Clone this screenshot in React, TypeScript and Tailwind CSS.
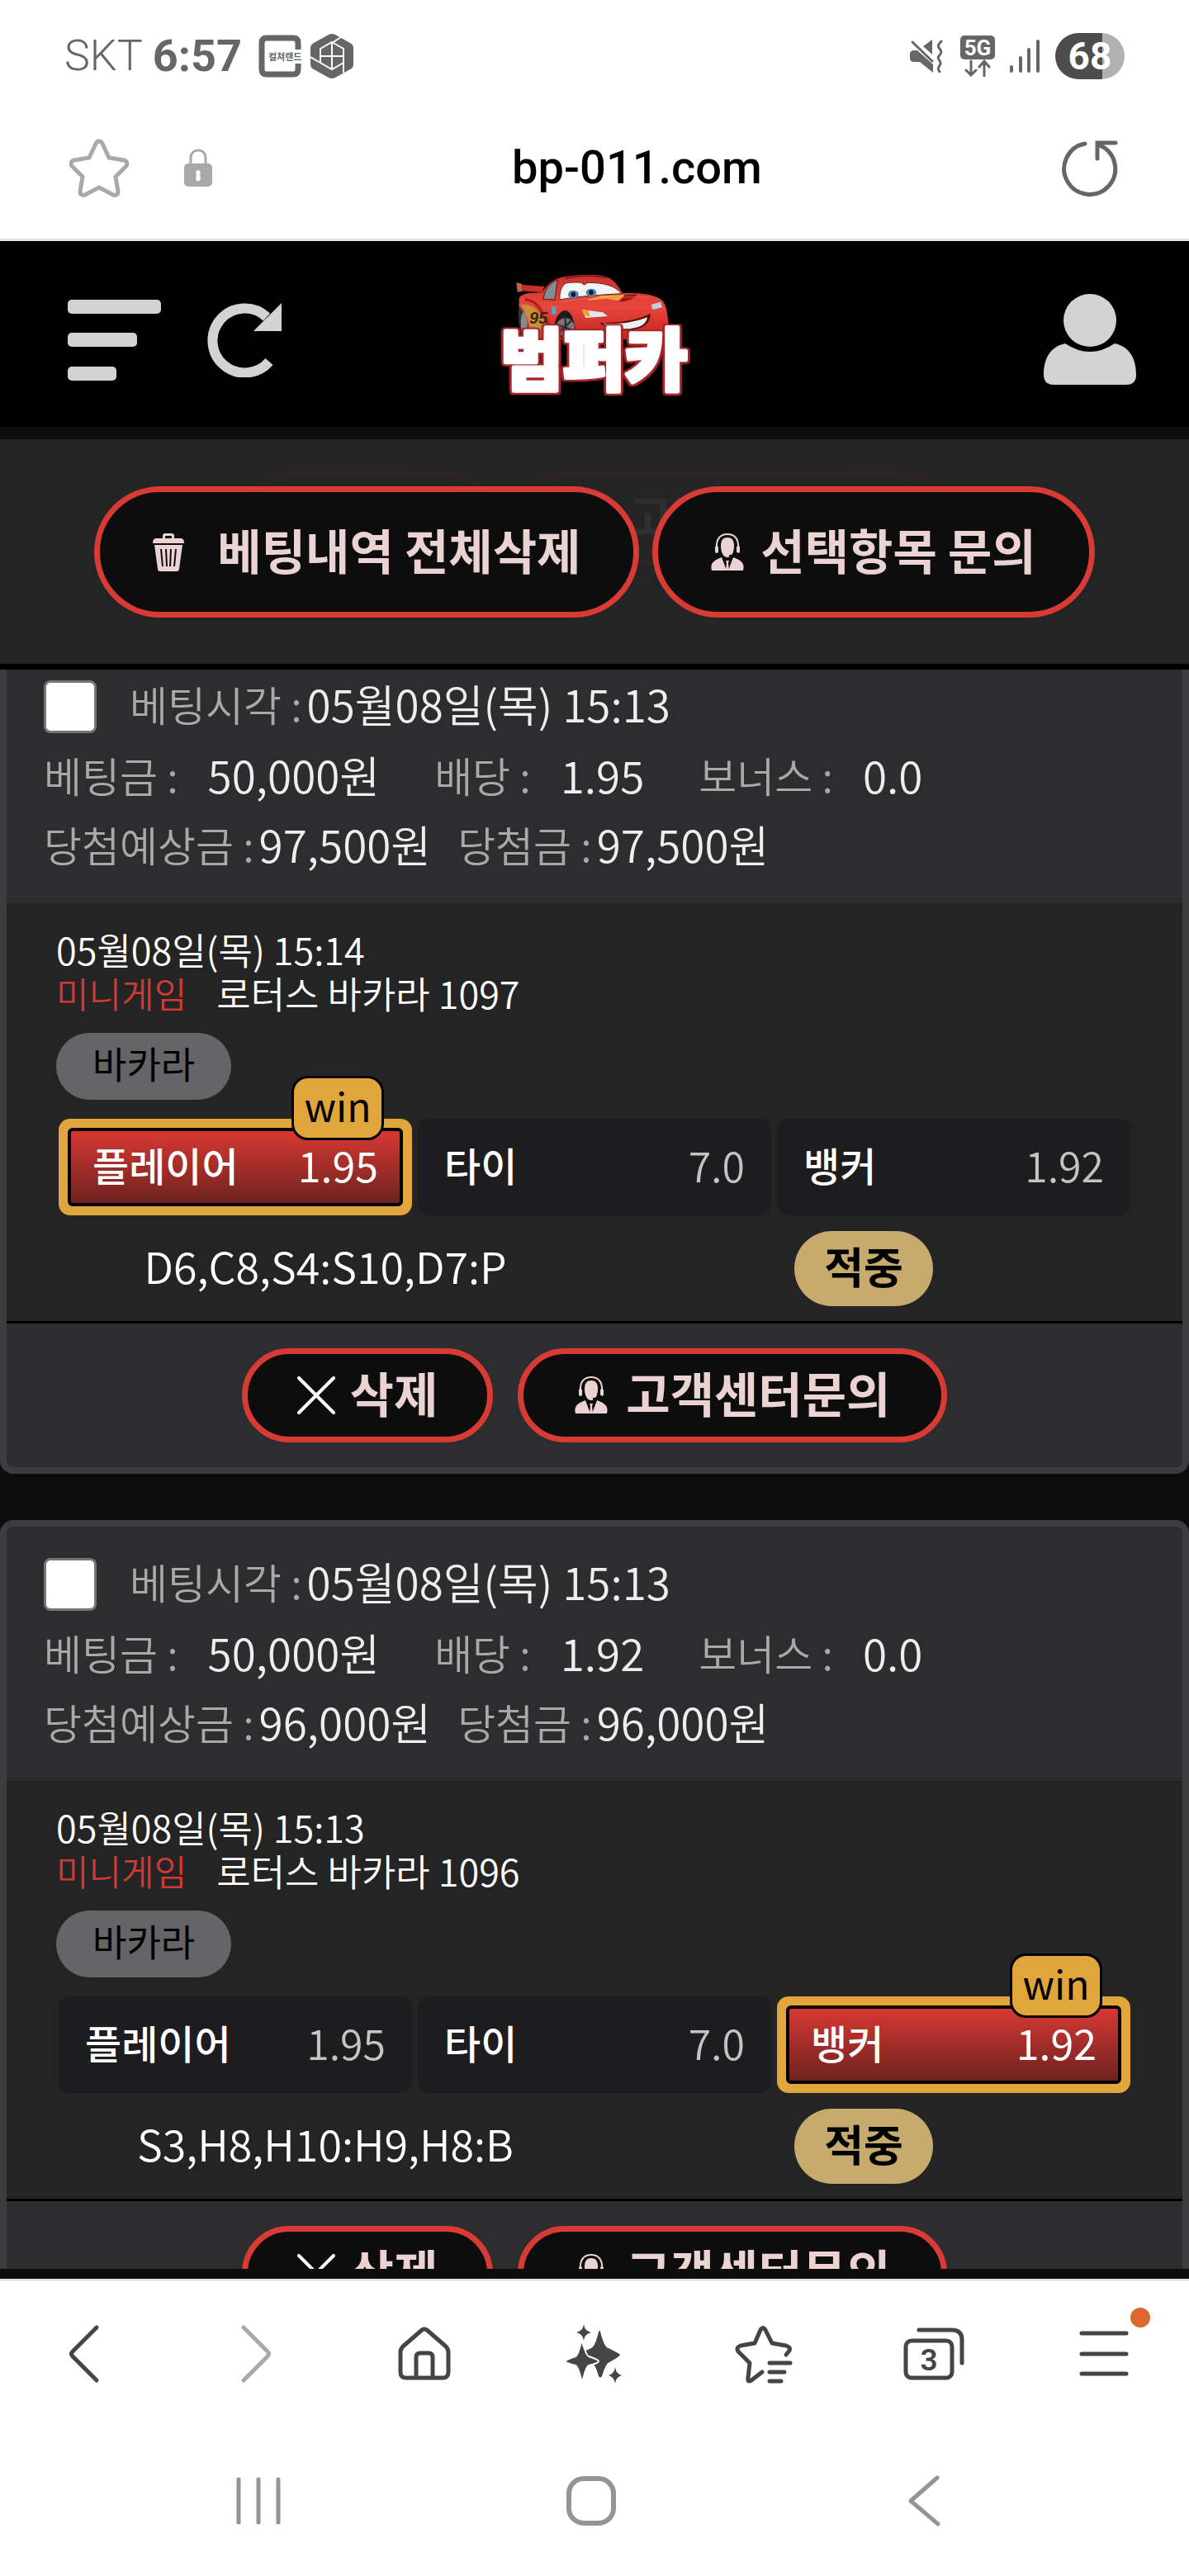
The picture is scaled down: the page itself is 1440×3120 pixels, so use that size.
import type { ReactNode } from 'react'
import clsx from 'clsx'

interface Option {
  name: string
  odds: string
  win?: boolean
}

interface Bet {
  id: number
  placedAt: string
  stake: string
  odds: string
  bonus: string
  expected: string
  payout: string
  playedAt: string
  game: string
  options: Option[]
  result: string
}

const bets: Bet[] = [
  {
    id: 1097,
    placedAt: '05월08일(목) 15:13',
    stake: '50,000원',
    odds: '1.95',
    bonus: '0.0',
    expected: '97,500원',
    payout: '97,500원',
    playedAt: '05월08일(목) 15:14',
    game: '로터스 바카라 1097',
    options: [
      { name: '플레이어', odds: '1.95', win: true },
      { name: '타이', odds: '7.0' },
      { name: '뱅커', odds: '1.92' },
    ],
    result: 'D6,C8,S4:S10,D7:P',
  },
  {
    id: 1096,
    placedAt: '05월08일(목) 15:13',
    stake: '50,000원',
    odds: '1.92',
    bonus: '0.0',
    expected: '96,000원',
    payout: '96,000원',
    playedAt: '05월08일(목) 15:13',
    game: '로터스 바카라 1096',
    options: [
      { name: '플레이어', odds: '1.95' },
      { name: '타이', odds: '7.0' },
      { name: '뱅커', odds: '1.92', win: true },
    ],
    result: 'S3,H8,H10:H9,H8:B',
  },
]

const STAR = 'M36 4c2 0 3 1 4 3l8 17 18 3c4 1 5 4 3 7L56 47l3 18c0 4-3 5-6 4L36 60 19 69c-3 1-6 0-6-4l3-18L3 34c-2-3-1-6 3-7l18-3 8-17c1-2 2-3 4-3z'

// Icons
function AgentIcon() {
  return (
    <svg viewBox="0 0 40 46" className="h-[46px] w-10 shrink-0" fill="#ebd3d3" aria-hidden="true">
      <path d="M7 18C6 6 12 1 20 1s14 5 13 17" fill="none" stroke="#ebd3d3" strokeWidth="2" />
      <path d="M12 15c0-7 3-10 8-10s8 3 8 10c0 8-3 14-8 14s-8-6-8-14z" />
      <rect x="5" y="15" width="4" height="9" rx="2" />
      <rect x="31" y="15" width="4" height="9" rx="2" />
      <path d="M32 23c-1 3-5 4-10 4" fill="none" stroke="#0d0d0d" strokeWidth="2" />
      <path d="M13 29l6 16H1c-2-8 1-12 12-16zM27 29l-6 16h18c2-8-1-12-12-16z" />
      <path d="M18 33h4l-1 3 1 9h-4l1-9z" />
    </svg>
  )
}

function TrashIcon() {
  return (
    <svg viewBox="0 0 38 46" className="h-[46px] w-[38px] shrink-0" fill="#ebd3d3" aria-hidden="true">
      <path d="M12 6V3q0-3 3-3h8q3 0 3 3v3h8q4 0 4 6H0q0-6 4-6zm3 0h8V4q0-1-1-1h-6q-1 0-1 1z" />
      <path d="M2 14h34l-4 29q0 3-3 3H9q-3 0-3-3z" />
      <path d="M10 19l2 21M16 19l1 21M22 19l-1 21M28 19l-2 21" stroke="#0d0d0d" strokeWidth="2" />
    </svg>
  )
}

function CloseIcon() {
  return (
    <svg viewBox="0 0 46 46" className="size-[46px] shrink-0" stroke="#fff" strokeWidth="4" strokeLinecap="round" aria-hidden="true">
      <path d="M2 2l42 42M44 2L2 44" />
    </svg>
  )
}

function Logo() {
  return (
    <svg viewBox="0 60 960 546" className="h-[182px] w-80" role="img" aria-label="범퍼카">
      <defs>
        <linearGradient id="paint" x1="0" y1="0" x2="0" y2="1">
          <stop offset="0" stopColor="#c9302b" />
          <stop offset="0.5" stopColor="#e8473d" />
          <stop offset="1" stopColor="#c4231d" />
        </linearGradient>
      </defs>
      <path d="M196 124l20 4 2 28-18 2z" fill="#b8684a" />
      <path d="M216 132l82 6-8 22-72-6z" fill="#c9302b" />
      <path d="M206 200c-6 60 2 110 20 130h40V190z" fill="#333236" />
      <path
        d="M206 180c10-18 40-18 84-20 20-34 44-50 80-57 60-10 110-10 150-2 30 10 46 34 62 62 60-4 124 4 146 28 18 24 22 70 20 139H240c0-50-6-90-34-120z"
        fill="url(#paint)"
      />
      <path d="M212 204c30-4 60 10 80 50l34 70h-80c0-50-10-90-34-120z" fill="#c8903a" />
      <path d="M228 186c24 0 50 16 66 56M300 250l20 40" fill="none" stroke="#a9201c" strokeWidth="10" />
      <path d="M294 184c4-36 20-58 52-70-4 26-6 48-10 72z" fill="#7e8c95" stroke="#7c1b18" strokeWidth="4" />
      <path d="M372 110c50-14 110-12 156-4" fill="none" stroke="#7c1b18" strokeWidth="5" />
      <path d="M354 186c-2-28 6-50 22-60 20-4 40-4 56-2l10 8 14-8c60 0 100 12 122 40-70 4-150 8-224 22z" fill="#f1f4f6" stroke="#7c1b18" strokeWidth="3" />
      <ellipse cx="403" cy="167" rx="19" ry="15" fill="#4a86ad" />
      <ellipse cx="403" cy="167" rx="8" ry="9" fill="#101820" />
      <ellipse cx="468" cy="160" rx="19" ry="14" fill="#4a86ad" />
      <ellipse cx="468" cy="160" rx="8" ry="9" fill="#101820" />
      <path d="M454 186l50-14 96-4-16 10-20 10-40-6-66 6z" fill="#f0b43a" />
      <path d="M590 168l46-2c-10 14-30 26-66 28z" fill="#8f1a17" />
      <path d="M350 196c60-16 200-20 330-20" fill="none" stroke="#f06a5c" strokeWidth="4" opacity="0.6" />
      <path d="M434 222l30 4 46 6 18 14-80 6z" fill="#dfe8ef" />
      <path d="M434 222l24 4 6 22-18-4z" fill="#eaa62c" />
      <path d="M686 204l34-10 6 20-34 8z" fill="#b9d0e4" />
      <path d="M498 270c60 0 130-6 186-34-2 40-30 58-80 60-50 0-86-8-106-26z" fill="#5c100e" />
      <path d="M512 272c56 4 116-4 160-22-4 26-26 38-68 42-40 0-74-6-92-20z" fill="#eceff0" />
      <path d="M334 330c-6-50 6-96 36-104 20-2 36 20 42 84z" fill="#1d1b1d" />
      <circle cx="374" cy="286" r="33" fill="#77777b" />
      <path d="M374 254v64M344 276l60 22M350 306l46-44" stroke="#2b2b2e" strokeWidth="7" />
      <ellipse cx="224" cy="270" rx="12" ry="40" fill="#8b8785" />
      <path d="M324 210h16v30h-16z" fill="#6d96b8" />
      <text
        x="276"
        y="272"
        textAnchor="middle"
        fontSize="60"
        fontWeight="700"
        fill="#3d261c"
        className="font-['Liberation_Sans',sans-serif] italic"
      >
        95
      </text>
      <text
        x="478"
        y="494"
        textAnchor="middle"
        fontSize="246"
        fontWeight="900"
        fill="#fff"
        stroke="#fff"
        strokeWidth="14"
        strokeLinejoin="round"
        className="font-['Noto_Sans_CJK_KR',sans-serif] [filter:drop-shadow(7px_0_0_#a8262b)_drop-shadow(-7px_0_0_#a8262b)_drop-shadow(0_7px_0_#a8262b)_drop-shadow(0_-5px_0_#a8262b)]"
      >
        범퍼카
      </text>
    </svg>
  )
}

// Device and browser chrome
function StatusBar() {
  return (
    <div className="flex h-[136px] shrink-0 items-center justify-between px-[78px] font-[Roboto,sans-serif] text-[#666]">
      <div className="flex items-center">
        <span className="text-[52px] leading-none font-light">SKT</span>
        <span className="ml-3 text-[54px] leading-none font-bold">6:57</span>
        <svg viewBox="0 0 52 52" className="ml-5 size-[52px]" aria-hidden="true">
          <path d="M48 18V10Q48 4 42 4H10Q4 4 4 10V42Q4 48 10 48H42Q48 48 48 42V35" fill="none" stroke="#666" strokeWidth="7" />
          <text x="12" y="31" fontSize="11" fontWeight="700" fill="#666" className="font-['Noto_Sans_CJK_KR',sans-serif]">컬쳐랜드</text>
        </svg>
        <svg viewBox="0 0 52 54" className="ml-[11px] h-[54px] w-[52px]" aria-hidden="true">
          <path d="M26 0q2 0 4 1l18 10q4 2 4 6v20q0 4-4 6L30 53q-4 2-8 0L4 43q-4-2-4-6V17q0-4 4-6L22 1q2-1 4-1z" fill="#666" />
          <g fill="none" stroke="#fff" strokeWidth="2">
            <path d="M26 10l14 8v17l-14 8-14-8V18zM26 10v33M12 27h28M26 11L37 4M40 18v29M12 35L0 28" />
          </g>
        </svg>
      </div>
      <div className="flex items-center">
        <svg viewBox="0 0 40 40" className="size-10" fill="#666" aria-hidden="true">
          <path d="M27 0v18L16 8zM5 13h4l19 17v10L12 27H5q-5 0-5-5v-4q0-5 5-5z" />
          <path d="M3 3l24 23" stroke="#666" strokeWidth="3" strokeLinecap="round" />
          <path d="M38 2c-4 5-5 5-2 9s2 5-1 9 3 5 2 9-5 5-1 10" fill="none" stroke="#666" strokeWidth="3" strokeLinecap="round" />
        </svg>
        <svg viewBox="0 0 42 50" className="ml-[21px] h-[50px] w-[42px]" aria-hidden="true">
          <rect width="42" height="29" rx="5" fill="#666" />
          <text x="21" y="24" textAnchor="middle" fontSize="26" fontWeight="700" fill="#fff">5G</text>
          <path d="M13 31v16M7 42l6 6 6-6M29 49V32M23 38l6-7 6 7" fill="none" stroke="#666" strokeWidth="3" strokeLinecap="round" />
        </svg>
        <svg viewBox="0 0 36 40" className="ml-[18px] h-10 w-9" stroke="#666" strokeWidth="4" strokeLinecap="round" aria-hidden="true">
          <path d="M2 33v5M13 22v16M23 12v26M34 2v36" />
        </svg>
        <span className="ml-[19px] flex h-14 w-[84px] items-center justify-center rounded-full bg-linear-to-r from-[#4d4d4d] from-68% to-[#b1b1b1] to-68% text-[46px] font-bold text-white">
          68
        </span>
      </div>
    </div>
  )
}

function AddressBar() {
  return (
    <div className="flex h-[156px] shrink-0 items-center border-b-[3px] border-[#e4e4e4] px-[84px] pb-5">
      <div className="flex items-center gap-[67px]">
        <button type="button" aria-label="북마크">
          <svg viewBox="0 0 72 72" className="size-[72px]" fill="none" stroke="#a9a9a9" strokeWidth="5">
            <path d={STAR} />
          </svg>
        </button>
        <svg viewBox="0 0 34 46" className="h-[46px] w-[34px]" aria-hidden="true">
          <path d="M8 20V12C8 5 12 2 17 2s9 3 9 10v8" fill="none" stroke="#a9a9a9" strokeWidth="3" />
          <rect y="18" width="34" height="28" rx="5" fill="#a9a9a9" />
          <path d="M17 26a3 3 0 0 1 2 5l1 6q-3 5-6 0l1-6a3 3 0 0 1 2-5z" fill="#fff" />
        </svg>
      </div>
      <span className="flex-1 text-center font-[Roboto,sans-serif] text-[56px] leading-none font-medium text-black">bp-011.com</span>
      <button type="button" aria-label="새로고침">
        <svg viewBox="0 0 70 70" className="size-[70px]" fill="none" stroke="#66666a" strokeWidth="5" strokeLinecap="round">
          <path d="M28 6A31 31 0 1 0 46 8M65 5H43V24" />
        </svg>
      </button>
    </div>
  )
}

function SiteHeader() {
  return (
    <header className="grid h-[225px] shrink-0 grid-cols-3 items-center bg-black px-16 pt-3.5">
      <div className="flex items-center gap-14 pl-[18px]">
        <button type="button" aria-label="메뉴">
          <svg viewBox="0 0 113 98" className="h-[98px] w-[113px]" fill="#d3d3d3">
            <rect width="113" height="17" rx="5" />
            <rect y="40" width="84" height="17" rx="5" />
            <rect y="81" width="59" height="17" rx="5" />
          </svg>
        </button>
        <button type="button" aria-label="다시 불러오기">
          <svg viewBox="0 0 90 90" className="size-[90px]">
            <path d="M75 71A39 39 0 1 1 72 17" fill="none" stroke="#d3d3d3" strokeWidth="12" />
            <path d="M90 0v34H56z" fill="#d3d3d3" />
          </svg>
        </button>
      </div>
      <a href="#home" className="justify-self-center">
        <Logo />
      </a>
      <button type="button" aria-label="내 정보" className="justify-self-end">
        <svg viewBox="0 0 112 112" className="size-28" fill="#d3d3d3">
          <circle cx="56" cy="32" r="32" />
          <path d="M26 60q30 20 60 0c18 4 26 18 26 38q0 12-12 12H12Q0 110 0 98c0-20 8-34 26-38z" />
        </svg>
      </button>
    </header>
  )
}

function PillButton({ icon, children, className }: { icon: ReactNode; children: ReactNode; className?: string }) {
  return (
    <button
      type="button"
      className={clsx(
        'flex items-center rounded-full border-[7px] border-[#d83a34] bg-[#0d0d0d] text-[58px] leading-none font-bold whitespace-nowrap text-[#ebd3d3]',
        className,
      )}
    >
      {icon}
      <span className="pb-2">{children}</span>
    </button>
  )
}

function Toolbar() {
  return (
    <div className="relative mt-[15px] flex shrink-0 justify-center gap-4 border-b-[7px] border-black bg-[#242424] pt-[57px] pb-14">
      {/* the previous card shows faintly through the bar */}
      <div className="pointer-events-none absolute inset-x-0 top-0 flex justify-center gap-[30px] rounded-b-2xl pt-[38px] pb-[30px] opacity-5" aria-hidden="true">
        <div className="h-[114px] w-[305px] rounded-full border-[7px] border-[#d83a34]" />
        <div className="h-[114px] w-[519px] rounded-full border-[7px] border-[#d83a34] pl-[126px] text-[58px] leading-[92px] font-bold text-white">고객</div>
      </div>
      <PillButton icon={<TrashIcon />} className="relative h-[159px] gap-10 px-16">베팅내역 전체삭제</PillButton>
      <PillButton icon={<AgentIcon />} className="relative h-[159px] gap-5 px-16">선택항목 문의</PillButton>
    </div>
  )
}

function Field({ label, value, className }: { label: string; value: string; className?: string }) {
  return (
    <div className={clsx('flex items-center whitespace-nowrap', className)}>
      <dt className="text-[50px] font-[350] text-[#a9a9a9]">{label}</dt>
      <dd className="text-[53px] font-[350] text-[#eee]">{value}</dd>
    </div>
  )
}

function OptionCell({ name, odds, win }: Option) {
  return (
    <li
      className={clsx(
        'relative flex h-[117px] items-center rounded-[14px] text-[48px] leading-none text-white',
        win ? 'bg-[#e1a63b] p-[11px]' : 'bg-[#1d1d1f] px-8',
      )}
    >
      <div
        className={clsx(
          'flex flex-1 items-center justify-between pb-2',
          win && 'h-full rounded-md border-4 border-black bg-linear-to-b from-[#d83832] to-[#6f2220] px-[26px]',
        )}
      >
        <span className="font-medium">{name}</span>
        <span className={clsx('text-[50px]', win ? 'font-normal' : 'font-[350] text-[#c4c4c4]')}>{odds}</span>
      </div>
      {win && (
        <span className="absolute -top-[52px] right-[34px] flex h-[78px] w-28 items-center justify-center rounded-[20px] border-[3px] border-black bg-[#e1a63b] pb-2 font-normal text-black">
          win
        </span>
      )}
    </li>
  )
}

function BetCard({ bet }: { bet: Bet }) {
  const checkId = `bet-${bet.id}`
  return (
    <article className="rounded-2xl border-8 border-[#3c3c3e] bg-[#2d2d2f]">
      <div className="px-[45px] pt-[38px] pb-[30px]">
        <div className="mb-2 flex h-16 items-center gap-10">
          <input
            id={checkId}
            type="checkbox"
            className="size-16 appearance-none rounded-lg border-[3px] border-[#767676] bg-white"
          />
          <label htmlFor={checkId} className="flex items-center gap-1.5 pb-2 text-[50px] leading-none font-[350] whitespace-nowrap text-[#a9a9a9]">
            베팅시각 :<span className="text-[53px] text-[#eee]">{bet.placedAt}</span>
          </label>
        </div>
        <dl className="flex gap-[66px] leading-[84px]">
          <Field label="베팅금 :" value={bet.stake} className="gap-9" />
          <Field label="배당 :" value={bet.odds} className="gap-9" />
          <Field label="보너스 :" value={bet.bonus} className="gap-9" />
        </dl>
        <dl className="flex gap-8 leading-[84px]">
          <Field label="당첨예상금 :" value={bet.expected} className="gap-1.5" />
          <Field label="당첨금 :" value={bet.payout} className="gap-1.5" />
        </dl>
      </div>

      <div className="border-b-[3px] border-black bg-[#242424] px-[60px] pt-[29px] pb-[18px] text-[45px] leading-[53px] font-[350] text-white">
        <p>{bet.playedAt}</p>
        <p className="flex gap-9">
          <span className="text-[43px] text-[#cf3a34]">미니게임</span>
          <span>{bet.game}</span>
        </p>
        <span className="mt-[22px] flex h-[81px] w-fit items-center rounded-full bg-[#656567] px-11 pb-2 font-normal text-black">바카라</span>
        <ul className="mx-[3px] mt-[23px] grid grid-cols-3 gap-[7px]">
          {bet.options.map((option) => (
            <OptionCell key={option.name} {...option} />
          ))}
        </ul>
        <div className="mt-[19px] grid grid-cols-2 items-center justify-items-center text-[52px]">
          <span className="pb-2">{bet.result}</span>
          <span className="flex h-[91px] items-center rounded-full bg-[#c7ab6e] px-9 pb-2 font-bold text-black">적중</span>
        </div>
      </div>

      <div className="flex justify-center gap-[30px] py-[30px]">
        <PillButton icon={<CloseIcon />} className="h-[114px] gap-[18px] px-[60px]">삭제</PillButton>
        <PillButton icon={<AgentIcon />} className="h-[114px] gap-[22px] px-[62px]">고객센터문의</PillButton>
      </div>
    </article>
  )
}

function NavButton({ label, children }: { label: string; children: ReactNode }) {
  return (
    <button type="button" aria-label={label} className="relative flex flex-1 justify-center">
      <svg viewBox="0 0 80 80" className="size-20" fill="none" stroke="#454545" strokeWidth="5" strokeLinecap="round" strokeLinejoin="round">
        {children}
      </svg>
    </button>
  )
}

function BrowserNav() {
  return (
    <nav className="flex h-[178px] shrink-0 items-center border-t-[3px] border-[#e4e2e6]">
      <NavButton label="뒤로">
        <path d="M54 8L25 37Q22 40 25 43L54 72" />
      </NavButton>
      <NavButton label="앞으로">
        <path d="M26 8L55 37Q58 40 55 43L26 72" stroke="#a9a9a9" />
      </NavButton>
      <NavButton label="홈">
        <path d="M11 38Q11 34 14 31L37 11Q40 9 43 11L66 31Q69 34 69 38V62Q69 69 62 69H18Q11 69 11 62zM30 69V44Q30 39 35 39H45Q50 39 50 44V69" />
      </NavButton>
      <NavButton label="AI 도우미">
        <g fill="#454545" stroke="none">
          <path d="M47 13q5 20 10 20 14 7 14 8 0 2-13 9-5 2-9 17-2 3-4 0-4-15-9-17-13-7-13-9t13-8q5-2 9-20 1-2 2 0z" />
          <path d="M25 25q5 17 8 18 12 4 12 6t-12 5q-3 1-7 17-1 2-2 0-4-16-7-17-12-3-12-5t12-6q3-1 7-18z" stroke="#fff" strokeWidth="2" />
          <path d="M27 4c1 6 3 8 9 10-6 2-8 4-9 10-1-6-3-8-9-10 6-2 8-4 9-10zM65 56c1 6 3 8 8 10-5 2-7 4-8 10-1-6-3-8-8-10 5-2 7-4 8-10z" />
        </g>
      </NavButton>
      <NavButton label="북마크 목록">
        <path d="M37 62L24 72Q19 75 20 69L22 51 8 37Q5 32 11 30L28 27 35 11Q38 6 41 11L49 27 66 30Q72 32 70 36L66 41M46 51H71M46 62H64M46 73H60" />
      </NavButton>
      <NavButton label="탭">
        <rect x="6" y="24" width="56" height="45" rx="7" />
        <path d="M22 11H62Q74 11 74 23V51" />
        <text x="34" y="60" textAnchor="middle" fontSize="37" fontWeight="600" fill="#454545" stroke="none" className="font-[Roboto,sans-serif]">3</text>
      </NavButton>
      <div className="relative flex flex-1">
        <NavButton label="더보기">
          <path d="M13 15H67M13 40H67M13 64H67" />
        </NavButton>
        <span className="absolute -top-4 left-1/2 ml-8 size-6 rounded-full bg-[#dc672f]" />
      </div>
    </nav>
  )
}

function SystemNav() {
  return (
    <nav className="flex h-[182px] shrink-0 items-center justify-around pr-[120px] pl-[112px]">
      <button type="button" aria-label="최근 앱">
        <svg viewBox="0 0 62 62" className="size-[62px]" stroke="#949494" strokeWidth="5" strokeLinecap="round">
          <path d="M7 5V57M31 5V57M55 5V57" />
        </svg>
      </button>
      <button type="button" aria-label="홈 화면">
        <svg viewBox="0 0 62 62" className="size-[62px]" fill="none" stroke="#949494" strokeWidth="6">
          <rect x="4" y="4" width="54" height="54" rx="18" />
        </svg>
      </button>
      <button type="button" aria-label="이전">
        <svg viewBox="0 0 62 62" className="size-[62px]" fill="none" stroke="#949494" strokeWidth="5" strokeLinecap="round" strokeLinejoin="round">
          <path d="M47 3L15 31L48 59" />
        </svg>
      </button>
    </nav>
  )
}

export default function App() {
  return (
    <div className="flex h-screen flex-col overflow-hidden bg-white font-['Noto_Sans_CJK_KR',sans-serif]">
      <StatusBar />
      <AddressBar />
      <main className="flex min-h-0 flex-1 flex-col bg-[#0d0d0d] pb-3">
        <SiteHeader />
        <Toolbar />
        <div className="min-h-0 flex-1 overflow-hidden">
          {/* list is scrolled a little way under the toolbar */}
          <div className="-mt-[33px] flex flex-col gap-14">
            {bets.map((bet) => (
              <BetCard key={bet.id} bet={bet} />
            ))}
          </div>
        </div>
      </main>
      <BrowserNav />
      <SystemNav />
    </div>
  )
}
